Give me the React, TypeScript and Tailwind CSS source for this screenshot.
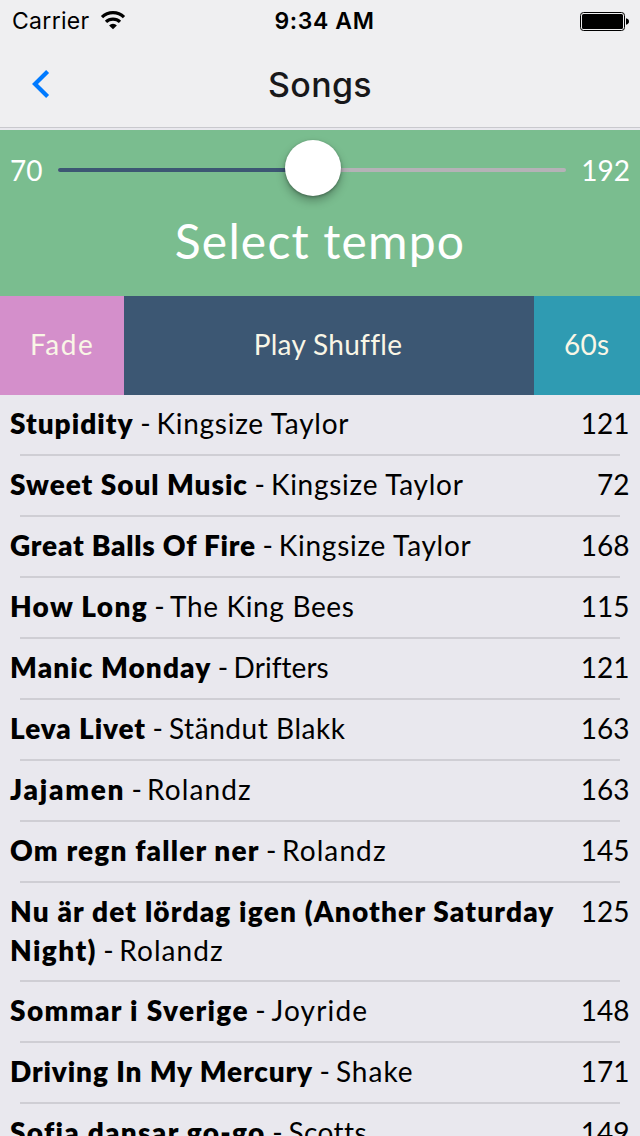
type Song = {
  title: string;
  titleClass: string;
  tail?: string;
  artist: string;
  artistClass: string;
  dashClass: string;
  tempo: number;
};

const songs: Song[] = [
  { title: "Stupidity", titleClass: "tracking-[1px]", artist: "Kingsize Taylor", artistClass: "tracking-[0.72px]", dashClass: "tracking-[-0.6px]", tempo: 121 },
  { title: "Sweet Soul Music", titleClass: "tracking-[0.96px]", artist: "Kingsize Taylor", artistClass: "tracking-[0.72px]", dashClass: "tracking-[-0.6px]", tempo: 72 },
  { title: "Great Balls Of Fire", titleClass: "tracking-[0.77px]", artist: "Kingsize Taylor", artistClass: "tracking-[0.72px]", dashClass: "tracking-[-0.6px]", tempo: 168 },
  { title: "How Long", titleClass: "tracking-[1.3px]", artist: "The King Bees", artistClass: "tracking-[0.65px]", dashClass: "tracking-[-0.9px]", tempo: 115 },
  { title: "Manic Monday", titleClass: "tracking-[1.07px]", artist: "Drifters", artistClass: "tracking-[0.05px]", dashClass: "tracking-[-0.8px]", tempo: 121 },
  { title: "Leva Livet", titleClass: "tracking-[0.9px]", artist: "Ständut Blakk", artistClass: "tracking-[0.55px]", dashClass: "tracking-[-0.6px]", tempo: 163 },
  { title: "Jajamen", titleClass: "tracking-[1.75px]", artist: "Rolandz", artistClass: "tracking-[1.1px]", dashClass: "tracking-[-1px]", tempo: 163 },
  { title: "Om regn faller ner", titleClass: "tracking-[1.17px]", artist: "Rolandz", artistClass: "tracking-[1.1px]", dashClass: "tracking-[-0.8px]", tempo: 145 },
  { title: "Nu är det lördag igen (Another Saturday ", titleClass: "tracking-[1.17px]", tail: "Night)", artist: "Rolandz", artistClass: "tracking-[1.1px]", dashClass: "tracking-[-0.8px]", tempo: 125 },
  { title: "Sommar i Sverige", titleClass: "tracking-[1.37px]", artist: "Joyride", artistClass: "tracking-[1.15px]", dashClass: "tracking-[-0.7px]", tempo: 148 },
  { title: "Driving In My Mercury", titleClass: "tracking-[0.86px]", artist: "Shake", artistClass: "tracking-[1px]", dashClass: "tracking-[-0.6px]", tempo: 171 },
  { title: "Sofia dansar go-go", titleClass: "tracking-[1.28px]", artist: "Scotts", artistClass: "tracking-[0.4px]", dashClass: "tracking-[-0.6px]", tempo: 149 },
];

function WifiIcon() {
  return (
    <svg width="26" height="20" viewBox="0 0 26 20" className="block" fill="none" stroke="#000" strokeWidth="3.2">
      <path d="M2 6.200a15.600 15.600 0 0 1 22 0" />
      <path d="M6 10.900a10 10 0 0 1 14 0" />
      <path d="M13 18.300l-3.900-3.900a5.600 5.600 0 0 1 7.800 0z" fill="#000" stroke="none" />
    </svg>
  );
}

function BatteryIcon() {
  return (
    <svg width="49" height="19" viewBox="0 0 49 19" className="block">
      <rect x="0.5" y="0.5" width="44" height="18" rx="3" fill="none" stroke="#000" />
      <rect x="2" y="2" width="41" height="15" rx="1.5" fill="#000" />
      <path d="M46 6.300c1.800.3 3 1.500 3 3.200s-1.200 2.900-3 3.200z" fill="#000" />
    </svg>
  );
}

function Header() {
  return (
    <header className="h-32 shrink-0 border-b border-[#c9c9ce] bg-[#efeff1] font-[Inter,sans-serif]">
      <div className="grid h-[41px] grid-cols-[1fr_auto_1fr] items-center pr-[11px] pl-3 text-[23px] leading-[41px] text-black">
        <div className="flex items-center">
          <span className="pt-px tracking-[0.3px]">Carrier</span>
          <span className="ml-[10px]"><WifiIcon /></span>
        </div>
        <span className="pt-px pl-[8px] font-semibold tracking-[0.6px]">9:34 AM</span>
        <div className="flex justify-end"><BatteryIcon /></div>
      </div>
      <div className="grid h-[86px] grid-cols-[1fr_auto_1fr] items-center px-8">
        <svg width="18" height="28" viewBox="0 0 18 28" className="block" fill="none" stroke="#007aff" strokeWidth="4.2">
          <path d="M15.600 1.600L3 14l12.600 12.400" />
        </svg>
        <h1 className="pt-px text-[34px] leading-[42px] font-medium tracking-[0.3px] text-[#18181a]">Songs</h1>
      </div>
    </header>
  );
}

function TempoPanel() {
  return (
    <section className="mt-[2px] h-[166px] shrink-0 bg-[#7abd8f] text-white">
      <div className="flex h-20 items-center px-[10px] text-[28px] leading-[34px]">
        <span className="w-12">70</span>
        <div className="relative flex h-1 w-[508px] rounded-full bg-[#b5b2b7]">
          <div className="h-1 w-[255px] rounded-l-full bg-[#3c5773]" />
          <div className="absolute top-[-28px] left-[227px] size-14 rounded-full bg-white shadow-[0_5px_10px_rgba(0,0,0,0.28),0_1px_3px_rgba(0,0,0,0.3)]" />
        </div>
        <span className="flex-1 text-right">192</span>
      </div>
      <div className="pt-px text-center text-[48px] leading-[59px] tracking-[1.17px]">Select tempo</div>
    </section>
  );
}

export default function App() {
  return (
    <div className="flex h-[1136px] w-[640px] flex-col overflow-hidden bg-[#e9e8ee] font-[Lato,sans-serif]">
      <Header />
      <TempoPanel />
      <div className="flex h-[99px] shrink-0 text-[28px] leading-[34px] text-[#f9f6e6]">
        <button className="w-[124px] bg-[#d48fcb] pb-[4px] pl-[30px] text-left tracking-[1.5px]">Fade</button>
        <button className="flex-1 bg-[#3c5773] pr-[2px] pb-[4px] tracking-[0.3px]">Play Shuffle</button>
        <button className="w-[106px] bg-[#2f9bb2] pb-[4px] pl-[30px] text-left tracking-[0.2px]">60s</button>
      </div>
      <ul className="text-[28px] leading-[39px] text-black">
        {songs.map((s) => (
          <li key={s.title} className={s.tail ? "flex h-[99px] flex-col justify-between" : "flex h-[61px] flex-col justify-between"}>
            <div className="flex items-start justify-between pt-[9px] pr-[10.5px] pl-[10px]">
              <div className="w-[558px]">
                <span className={`font-extrabold ${s.titleClass}`}>{s.title}</span>
                {s.tail && <span className="font-extrabold tracking-[1.4px]">{s.tail}</span>}
                <span className={s.dashClass}> - </span>
                <span className={s.artistClass}>{s.artist}</span>
              </div>
              <span>{s.tempo}</span>
            </div>
            <div className="mx-5 h-[2px] shrink-0 bg-[#cfced4]" />
          </li>
        ))}
      </ul>
    </div>
  );
}
